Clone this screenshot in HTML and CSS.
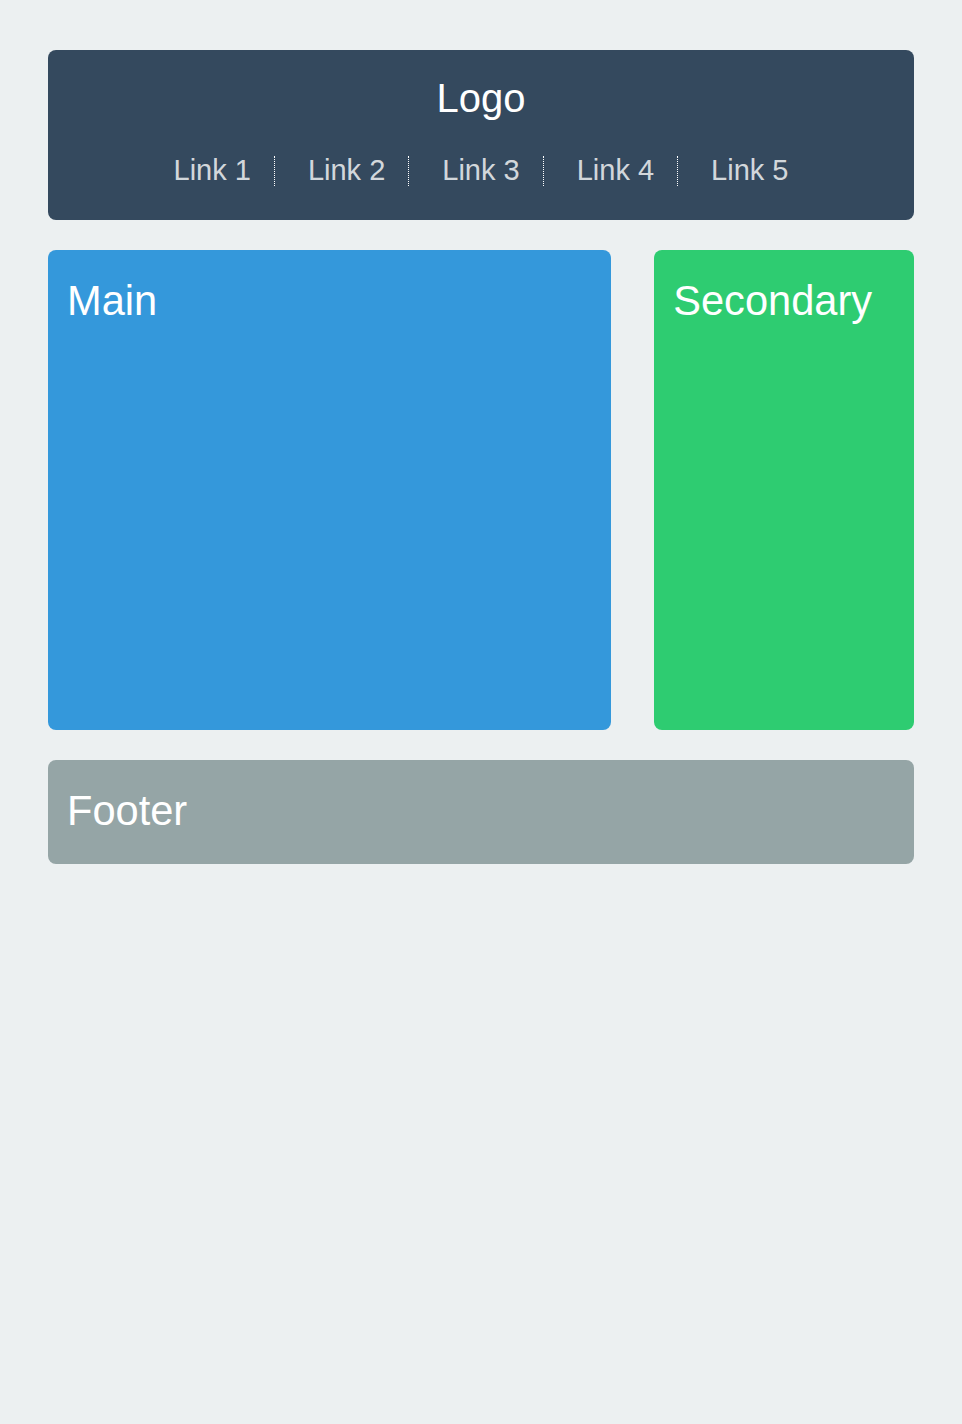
FILE: index.html
```html
<!DOCTYPE html>
<html lang="en">
<head>
<meta charset="utf-8">
<title>Layout</title>
<link rel="stylesheet" href="styles.css">
</head>
<body>
<div class="page">
  <header class="header">
    <div class="logo">Logo</div>
    <ul class="nav">
      <li class="nav-item">Link 1</li>
      <li class="nav-item">Link 2</li>
      <li class="nav-item">Link 3</li>
      <li class="nav-item">Link 4</li>
      <li class="nav-item">Link 5</li>
    </ul>
  </header>
  <div class="content">
    <section class="panel panel-main">Main</section>
    <aside class="panel panel-secondary">Secondary</aside>
  </div>
  <footer class="panel panel-footer">Footer</footer>
</div>
</body>
</html>
```
FILE: styles.css
```css
* { box-sizing: border-box; }

html, body {
  margin: 0;
  padding: 0;
  background: #ecf0f1;
  font-family: "Liberation Sans", Arial, Helvetica, sans-serif;
  color: #ffffff;
}

.page {
  padding: 50px 48px;
  display: flex;
  flex-direction: column;
  gap: 30px;
}

.header {
  background: #34495e;
  border-radius: 8px;
  padding: 24px 0 34px;
  display: flex;
  flex-direction: column;
  align-items: center;
}

.logo {
  font-size: 40px;
  line-height: 48px;
}

.nav {
  list-style: none;
  margin: 34px 0 0;
  padding: 0;
  display: flex;
  justify-content: center;
}

.nav-item {
  font-size: 29px;
  line-height: 28px;
  height: 30px;
  padding-bottom: 2px;
  color: rgba(255, 255, 255, 0.8);
}

.nav-item + .nav-item {
  margin-left: 23px;
  padding-left: 33px;
  border-left: 1px dotted #ffffff;
}

.content {
  display: flex;
  justify-content: space-between;
}

.panel {
  border-radius: 8px;
  font-size: 41.6px;
  line-height: 62px;
  padding: 20px 19px 22px;
}

.panel-main {
  width: 65%;
  height: 480px;
  background: #3498db;
}

.panel-secondary {
  width: 30%;
  height: 480px;
  background: #2ecc71;
}

.panel-footer {
  background: #95a5a6;
}
```
